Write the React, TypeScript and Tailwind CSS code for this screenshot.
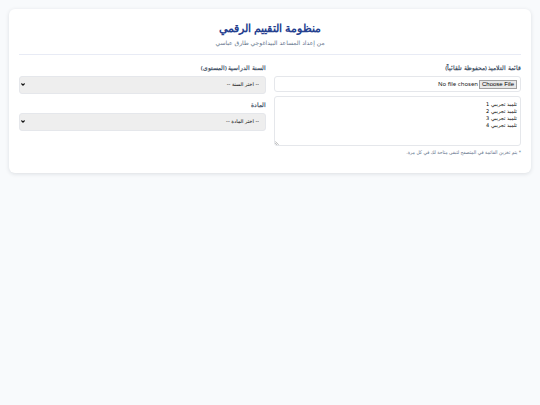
import { useState } from 'react'
import type { ReactNode } from 'react'

const years = ['السنة الأولى', 'السنة الثانية', 'السنة الثالثة', 'السنة الرابعة']
const subjects = ['اللغة العربية', 'الرياضيات', 'الإيقاظ العلمي']

const defaultStudents = [1, 2, 3, 4].map((n) => `تلميذ تجريبي ${n}`).join('\n')

interface FieldLabelProps {
  htmlFor: string
  children: ReactNode
}

function FieldLabel({ htmlFor, children }: FieldLabelProps) {
  return (
    <label htmlFor={htmlFor} className="mb-0.5 block text-[6px] leading-[11px] font-bold text-[#475569]">
      {children}
    </label>
  )
}

interface SelectFieldProps {
  id: string
  label: string
  placeholder: string
  options: string[]
}

function SelectField({ id, label, placeholder, options }: SelectFieldProps) {
  return (
    <div>
      <FieldLabel htmlFor={id}>{label}</FieldLabel>
      <div className="relative">
        <select
          id={id}
          defaultValue=""
          className="block h-[18px] w-full appearance-none rounded-[3px] border border-[#e5e7eb] bg-[#eeeeee] px-1.5 font-['DejaVu_Sans',sans-serif] text-[5px] text-black"
        >
          <option value="">{placeholder}</option>
          {options.map((option) => (
            <option key={option}>{option}</option>
          ))}
        </select>
        <svg
          viewBox="0 0 4 3"
          className="pointer-events-none absolute top-[7px] left-0.5 h-[3px] w-1"
          fill="none"
          stroke="#111111"
          strokeWidth="1.1"
        >
          <path d="M0.4 0.5 2 2.1 3.6 0.5" />
        </svg>
      </div>
    </div>
  )
}

export default function App() {
  const [students, setStudents] = useState(defaultStudents)

  return (
    <div dir="rtl" className="min-h-screen bg-[#f8fafc] p-[9px] font-['Noto_Sans',sans-serif]">
      <main className="rounded-md bg-white px-2.5 pt-2.5 pb-4 shadow-[0_1px_4px_rgba(15,23,42,0.12)]">
        <header className="mb-2 border-b border-[#e8ebf5] pb-1.5 text-center">
          <h1 className="text-[11px] leading-[18px] font-bold text-[#25408f]">منظومة التقييم الرقمي</h1>
          <p className="font-['DejaVu_Sans',sans-serif] text-[6px] leading-[11px] text-[#64748b]">
            من إعداد المساعد البيداغوجي طارق عباسي
          </p>
        </header>

        <div className="grid grid-cols-2 gap-2">
          <section>
            <FieldLabel htmlFor="students-file">قائمة التلاميذ (محفوظة تلقائياً)</FieldLabel>
            <input
              id="students-file"
              type="file"
              className="mb-1 block h-4 w-full rounded-[3px] border border-[#e5e7eb] px-[3px] py-[3px] text-[6px] leading-[8px] text-[#222222] file:me-px file:h-[9px] file:border file:border-solid file:border-[#a0a0a0] file:bg-[#e8e8e8] file:px-0.5 file:font-['Liberation_Sans',sans-serif] file:text-[6px] file:leading-[7px] file:text-black"
            />
            <div className="relative">
              <textarea
                aria-label="قائمة التلاميذ"
                value={students}
                onChange={(e) => setStudents(e.target.value)}
                className="block h-[50px] w-full resize-none rounded-[3px] border border-[#e5e7eb] px-[3px] py-1 font-['DejaVu_Sans',sans-serif] text-[5px] leading-[7px] text-black"
              />
              <svg
                viewBox="0 0 4 4"
                className="pointer-events-none absolute bottom-px left-px size-1"
                stroke="#888888"
                strokeWidth="0.6"
              >
                <path d="M0.2 0.4 3.6 3.8M0.2 2.2 1.8 3.8" />
              </svg>
            </div>
            <p className="mt-0.5 font-['DejaVu_Sans_Condensed','DejaVu_Sans',sans-serif] text-[5px] leading-[9px] text-[#64748b]">
              * يتم تخزين القائمة في المتصفح لتبقى متاحة لك في كل مرة.
            </p>
          </section>

          <section className="flex flex-col gap-1.5">
            <SelectField id="year" label="السنة الدراسية (المستوى)" placeholder="-- اختر السنة --" options={years} />
            <SelectField id="subject" label="المادة" placeholder="-- اختر المادة --" options={subjects} />
          </section>
        </div>
      </main>
    </div>
  )
}
